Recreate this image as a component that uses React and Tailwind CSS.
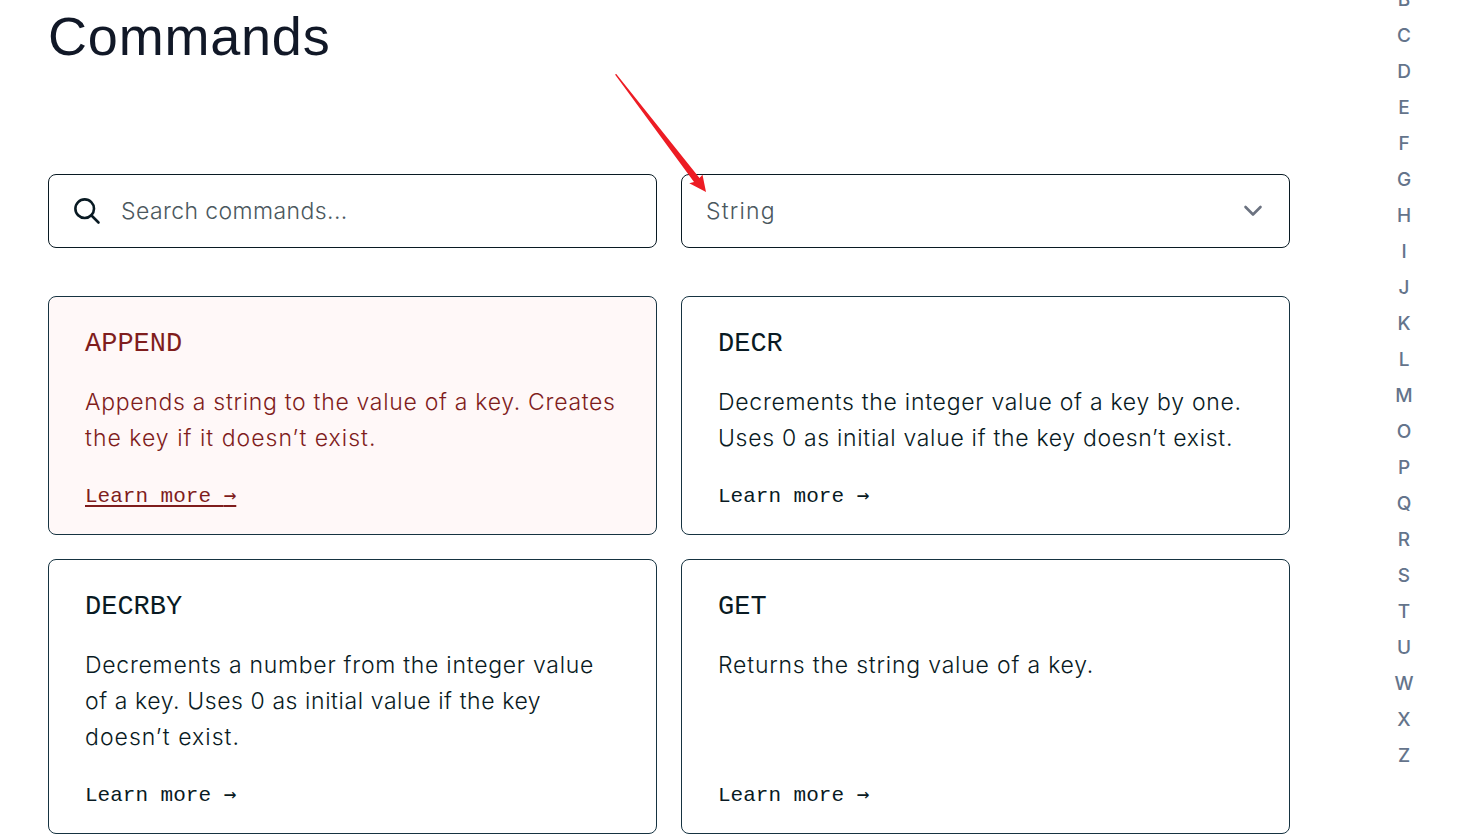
const letters = ['B', 'C', 'D', 'E', 'F', 'G', 'H', 'I', 'J', 'K', 'L', 'M', 'O', 'P', 'Q', 'R', 'S', 'T', 'U', 'W', 'X', 'Z'];

const commands = [
  {
    name: 'APPEND',
    lines: [
      ['Appends a string to the value of a key. Creates', 'tracking-[0.7px]'],
      ['the key if it doesn’t exist.', 'tracking-[1.02px]'],
    ],
    active: true,
  },
  {
    name: 'DECR',
    lines: [
      ['Decrements the integer value of a key by one.', 'tracking-[0.72px]'],
      ['Uses 0 as initial value if the key doesn’t exist.', 'tracking-[0.69px]'],
    ],
  },
  {
    name: 'DECRBY',
    lines: [
      ['Decrements a number from the integer value', 'tracking-[0.73px]'],
      ['of a key. Uses 0 as initial value if the key', 'tracking-[0.58px]'],
      ['doesn’t exist.', 'tracking-[1.04px]'],
    ],
  },
  { name: 'GET', lines: [['Returns the string value of a key.', 'tracking-[0.8px]']] },
];

function Card({ name, lines, active }) {
  return (
    <article
      className={
        'flex flex-col rounded-lg border border-[#163341] px-9 pt-[29px] pb-[19px] ' +
        (active ? 'bg-[#fff8f8] text-[#7f1d1d]' : 'bg-white text-[#091a23]')
      }
    >
      <h2 className="font-['Liberation_Mono',monospace] text-[27px] leading-9">{name}</h2>
      <p className="mt-[22px] grow text-[23px] leading-9 font-light">
        {lines.map(([line, tracking]) => (
          <span key={line} className={'block whitespace-nowrap ' + tracking}>{line}</span>
        ))}
      </p>
      <a
        className={
          "mt-[22px] self-start font-['Liberation_Mono',monospace] text-[21px] leading-9 whitespace-pre " +
          (active ? 'underline decoration-2 underline-offset-[3px]' : '')
        }
      >
        Learn more <span className="font-['DejaVu_Sans_Mono',monospace] leading-none">→</span>
      </a>
    </article>
  );
}

export default function App() {
  return (
    <div className="flex h-[839px] w-[1466px] overflow-hidden bg-white pl-12 font-[Inter,sans-serif]">
      <main className="w-[1242px] shrink-0">
        <h1 className="pt-1 font-['Liberation_Sans',sans-serif] text-[54px] leading-[64px] tracking-[0.8px] text-[#111827]">Commands</h1>
        <div className="mt-[106px] grid grid-cols-2 gap-6 text-[23px] font-light text-[#4b585e]">
          <div className="flex h-[74px] items-center rounded-lg border border-[#091a23] pl-6">
            <svg width="28" height="28" viewBox="0 0 28 28" fill="none" stroke="#091a23" strokeWidth="2.6" strokeLinecap="round">
              <circle cx="11.7" cy="11.7" r="9.3" />
              <path d="M18.5 18.5 25.5 25.5" />
            </svg>
            <span className="pl-5 tracking-[0.4px]">Search commands...</span>
          </div>
          <div className="relative flex h-[74px] items-center justify-between rounded-lg border border-[#091a23] pr-[26px] pl-6">
            <span className="tracking-[1.2px]">String</span>
            <svg width="20" height="12" viewBox="0 0 20 12" fill="none" stroke="#6b7280" strokeWidth="2.6" strokeLinecap="round" strokeLinejoin="round">
              <path d="M2.5 2 10 9.5 17.5 2" />
            </svg>
            <svg className="absolute -top-[101px] -left-[67px]" width="92" height="119" viewBox="615 74 92 119" fill="#ed1c24">
              <path d="M615 74.6 616.3 74 699.5 178 702.5 174.7 706 192 689.3 183.3 694 182Z" />
            </svg>
          </div>
        </div>
        <div className="mt-12 grid grid-cols-2 grid-rows-[239px_275px] gap-6">
          {commands.map((command) => (
            <Card key={command.name} {...command} />
          ))}
        </div>
      </main>
      <nav className="-mt-[18px] ml-[96px] flex w-9 flex-col items-center text-[19px] leading-9 font-medium text-[#64748b]">
        {letters.map((letter) => (
          <a key={letter} className="h-9 shrink-0">{letter}</a>
        ))}
      </nav>
    </div>
  );
}
